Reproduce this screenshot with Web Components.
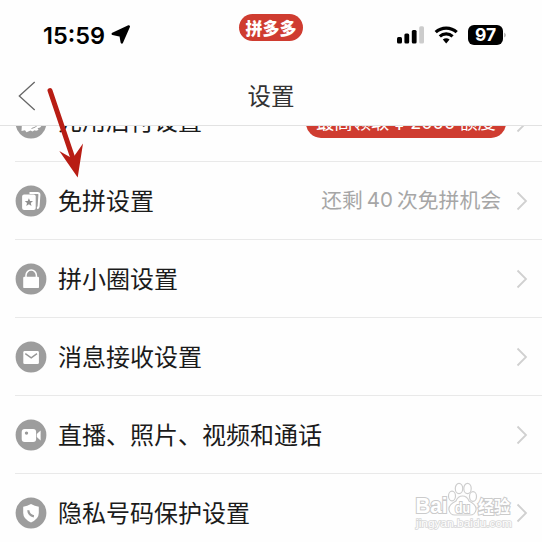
<!DOCTYPE html>
<html lang="zh-CN"><head><meta charset="utf-8"><title>设置</title>
<style>html,body{margin:0;background:#fefefe}</style></head><body>
<settings-app></settings-app>
<script>
const define=(name,html)=>customElements.define(name,class extends HTMLElement{
  constructor(){super();this.attachShadow({mode:'open'}).innerHTML=html;}
});
const glyphs={
  pay:'<path d="M7 8h16l3 10q-1 3-4 2.5l1 1.5q-2 2-4 .8l-2 1.2-2-1-4 1.8-1.5-2-3.5.6z" fill="#fff"/><path d="M16 21l4-1.5 4-4" stroke="#9d9d9d" stroke-width="1" fill="none"/>',
  cards:'<path d="M14 7.5h8.2q1.8 0 1.7 1.8l-.8 11.7q-.2 1.5-1.6 1.7" fill="none" stroke="#fff" stroke-width="2"/><rect x="6.6" y="9" width="13.6" height="15.6" rx="2" fill="#fff"/><path d="M13.4 12.7l1.2 2.7 2.9.2-2.2 1.9.7 2.9-2.6-1.6-2.6 1.6.7-2.9-2.2-1.9 2.9-.2z" fill="#8f8f8f"/>',
  bag:'<path d="M10.5 14v-2.200a5.2 5.2 0 0 1 10.4 0V14" fill="none" stroke="#fff" stroke-width="1.5"/><rect x="7.7" y="13.2" width="15.8" height="11.4" rx="1.2" fill="#fff"/>',
  mail:'<rect x="7.8" y="9.6" width="15.6" height="13" rx="1.4" fill="#fff"/><path d="M9.8 12.1l5.9 4.2 5.8-4.2" fill="none" stroke="#969696" stroke-width="1.4"/>',
  video:'<rect x="6.2" y="9.5" width="14.4" height="12.9" rx="3" fill="#fff"/><path d="M21.3 14.500l3.8-3.5v9.9l-3.8-3.5z" fill="#fff"/><circle cx="11" cy="13.6" r="1.7" fill="#999"/>',
  shield:'<path d="M15.5 6.5q3.8 2.4 7.8 2.7v6.400q0 6-7.8 9.4-7.8-3.4-7.8-9.4V9.2q4-.3 7.8-2.7z" fill="#fff"/><path d="M12.8 12.8q.3 5 5.6 6" fill="none" stroke="#9b9b9b" stroke-width="2.2"/>'
};
customElements.define('row-icon',class extends HTMLElement{
  constructor(){super();this.attachShadow({mode:'open'});}
  connectedCallback(){this.shadowRoot.innerHTML=`<style>:host{display:block;width:32px;height:32px}svg{display:block}</style><svg width="32" height="32" viewBox="-.5 -.5 32 32"><circle cx="15.5" cy="15.5" r="15.4" fill="#9d9d9d"/>${glyphs[this.getAttribute('name')]}</svg>`;}
});
define('status-bar',`<style>
:host{display:flex;box-sizing:border-box;height:66px;padding:0 36px 0 43px;align-items:flex-start;color:#000}
.left,.right{display:flex;align-items:center;height:28px;padding-top:21px}
.left{width:196px}.right{flex:1;justify-content:flex-end}
.time{font:600 23.5px/28px Inter,sans-serif;margin-right:6px;padding-top:1px;white-space:nowrap}
.brand{margin-top:14px;width:64px;height:27px;border-radius:14px;background:#cf3c30;color:#fff;font:900 17px/27px "Noto Sans CJK SC",sans-serif;text-align:center}
.battery{width:35px;height:20px;border-radius:6px;background:#000;color:#fff;font:700 17.5px/20px Inter,sans-serif;text-align:center}
</style>
<div class="left"><span class="time">15:59</span><svg width="20" height="20" viewBox="0 0 20 20"><path d="M1.8 8.8L17.8 1.400 10.8 17.4 9.6 10.6z" stroke="#000" stroke-width="2.4" stroke-linejoin="round"/></svg></div>
<div class="brand">拼多多</div>
<div class="right"><svg width="28" height="18" viewBox="0 0 28 18"><rect x="0" y="11" width="5" height="6.5" rx="1.5"/><rect x="7.4" y="7.6" width="4.8" height="9.9" rx="1.5"/><rect x="14.8" y="4" width="4.8" height="13.5" rx="1.5"/><rect x="22.2" y=".3" width="4.8" height="17.2" rx="1.5" fill="#ccc"/></svg>
<svg style="margin:0 9px 0 9px" width="25" height="18" viewBox="0 0 25 18"><g fill="none" stroke="#000" stroke-width="3.2"><path d="M1.7 6.2a15.3 15.3 0 0 1 21 0"/><path d="M5.8 10.4a9.5 9.5 0 0 1 12.8 0"/></g><path d="M8.8 13.6q3.4-2.8 6.8 0L12.2 17.4z"/></svg>
<div class="battery">97</div><svg width="2" height="6" viewBox="0 0 2 6" style="margin-left:1px"><path d="M0 .5q2 1 2 2.5t-2 2.5z" fill="#bbb"/></svg></div>`);
define('nav-bar',`<style>
:host{display:grid;grid-template-columns:60px 1fr 60px;align-items:center;box-sizing:border-box;height:60px;border-bottom:1px solid #e2e2e2}
svg{margin-left:18px}h1{margin:0;padding-bottom:2px;text-align:center;font:400 23.5px/34px "Noto Sans CJK SC",sans-serif;color:#333}
</style><svg width="18" height="30" viewBox="0 0 18 30"><path d="M16.7 1L1.3 15l15.4 14" fill="none" stroke="#666" stroke-width="1.3"/></svg><h1><slot></slot></h1>`);
customElements.define('setting-row',class extends HTMLElement{
  constructor(){super();this.attachShadow({mode:'open'});}
  connectedCallback(){this.shadowRoot.innerHTML=`<style>
:host{display:flex;align-items:center;box-sizing:border-box;height:78px;margin-left:15px;padding-right:14px;border-bottom:1px solid #e9e9e9}
.label{flex:1;margin-left:11px;font-size:24px;line-height:36px;padding-bottom:var(--label-lift,1px);color:#1b1b1b;white-space:nowrap}
.chev{margin-left:16px;flex:none}
</style><row-icon name="${this.getAttribute('icon')}"></row-icon><span class="label"><slot></slot></span><slot name="value"></slot><svg class="chev" width="12" height="20" viewBox="0 0 12 20"><path d="M1.5 1.5L10 10l-8.5 8.5" fill="none" stroke="#d0d0d0" stroke-width="1.8"/></svg>`;}
});
define('quota-pill',`<style>:host{display:flex;justify-content:center;box-sizing:border-box;width:200px;height:30px;padding-bottom:4px;border-radius:15px;background:#cf3c30;color:#fff;font-size:18.3px;line-height:26px;white-space:nowrap;margin-right:-6px}</style><slot></slot>`);
define('count-note',`<style>:host{display:flex;gap:4px;font-size:20.8px;line-height:30px;padding-bottom:2px;color:#a6a6a6;white-space:nowrap;margin-right:-1px}</style><slot></slot>`);
define('pointer-arrow',`<style>:host{position:absolute;left:44px;top:85px}svg{display:block}</style><svg width="44" height="96" viewBox="0 0 44 96"><path d="M6 5.5L30.5 78" stroke="#b81d14" stroke-width="5" stroke-linecap="round"/><path d="M33.7 92.5L15.3 66l13.2 7.5L39 58.5z" fill="#b81d14"/></svg>`);
define('site-watermark',`<style>
:host{position:absolute;left:414px;top:482px;width:102px;height:50px;font-family:"Liberation Sans","Noto Sans CJK SC",sans-serif}
svg{display:block}text{paint-order:stroke;stroke:#cbcbcb;stroke-width:2.200;fill:#fff}
</style><svg width="102" height="50" viewBox="0 0 102 50"><g fill="#fff" stroke="#cecece" stroke-width="1.2"><ellipse cx="45" cy="6.5" rx="3.7" ry="5.2"/><ellipse cx="53.5" cy="6.5" rx="3.7" ry="5.2"/><ellipse cx="38" cy="14" rx="3.5" ry="4.8"/><ellipse cx="59" cy="14.5" rx="3.5" ry="4.8"/><path d="M48.5 14q4.5 0 6.5 5 8 4 7 9-1 5-6 5H41q-5 0-6-5-1-5 7-9 2-5 6.5-5z"/></g>
<text x="1.5" y="31" font-size="22.5" font-weight="700" textLength="32" lengthAdjust="spacingAndGlyphs">Bai</text><text x="41" y="30.5" font-size="15" font-weight="700" textLength="15" lengthAdjust="spacingAndGlyphs">du</text><text x="64" y="30.5" font-size="17" font-weight="700" textLength="32" lengthAdjust="spacingAndGlyphs">经验</text><text x="2" y="44.5" font-size="11.5" textLength="96" lengthAdjust="spacingAndGlyphs" style="stroke:#d8d8d8;stroke-width:1.6">jingyan.baidu.com</text></svg>`);
define('settings-app',`<style>
:host{display:flex;flex-direction:column;position:relative;width:542px;height:542px;overflow:hidden;background:#fefefe;font-family:"Noto Sans CJK SC",sans-serif}
main{flex:1;min-height:0;overflow:hidden}.scroll{margin-top:-42px}
.first{--label-lift:5px}.num{font-family:Inter,sans-serif;padding-top:1px}.quota{font-size:18px;margin:0 4px 0 6px;padding-top:2px}.yen{margin-left:5px;padding-top:2px}
</style><status-bar></status-bar><nav-bar>设置</nav-bar><main><div class="scroll">
<setting-row icon="pay" class="first">先用后付设置<quota-pill slot="value"><span>最高领取</span><span class="num yen">¥</span><span class="num quota">2000</span><span>额度</span></quota-pill></setting-row>
<setting-row icon="cards">免拼设置<count-note slot="value"><span>还剩</span><span class="num" style="font-size:20.5px">40</span><span>次免拼机会</span></count-note></setting-row>
<setting-row icon="bag">拼小圈设置</setting-row>
<setting-row icon="mail">消息接收设置</setting-row>
<setting-row icon="video">直播、照片、视频和通话</setting-row>
<setting-row icon="shield">隐私号码保护设置</setting-row>
</div></main><pointer-arrow></pointer-arrow><site-watermark></site-watermark>`);
</script></body></html>
